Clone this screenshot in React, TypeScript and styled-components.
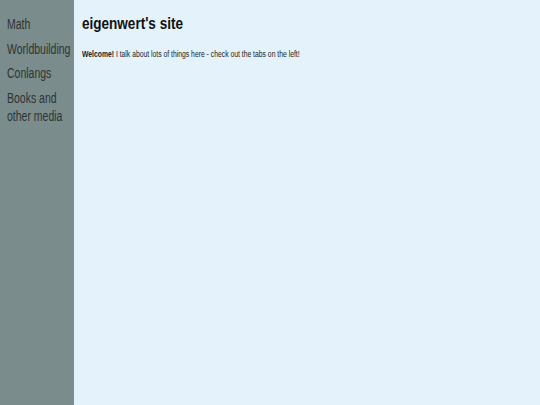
import React from "react";
import styled, { createGlobalStyle } from "styled-components";

const Global = createGlobalStyle`
  html, body { margin: 0; padding: 0; height: 100%; }
  body { font-family: "Liberation Sans", Arial, sans-serif; }
  #root { height: 100%; }
`;

const Page = styled.div`
  display: flex;
  width: 540px;
  height: 405px;
  background: #e3f2fb;
`;

const Sidebar = styled.nav`
  width: 74px;
  flex-shrink: 0;
  background: #7b8c8c;
  padding: 15px 0 0 7px;
  box-sizing: border-box;
  display: flex;
  flex-direction: column;
  align-items: flex-start;
  gap: 6.5px;
`;

const Squeeze = styled.span<{ $sx: number }>`
  display: inline-block;
  white-space: nowrap;
  transform: scaleX(${(p) => p.$sx});
  transform-origin: left center;
`;

const NavItem = styled.a`
  color: #2e3333;
  font-size: 14px;
  line-height: 18px;
  text-decoration: none;
`;

const Main = styled.main`
  flex: 1;
  padding: 14px 0 0 8px;
`;

const Title = styled.h1`
  margin: 0;
  font-size: 16.5px;
  line-height: 19px;
  font-weight: bold;
  color: #111;
`;

const Para = styled.p`
  margin: 16px 0 0;
  font-size: 8.5px;
  line-height: 10px;
  color: #222;
`;

export default function App() {
  return (
    <>
      <Global />
      <Page>
        <Sidebar>
          <NavItem><Squeeze $sx={0.75}>Math</Squeeze></NavItem>
          <NavItem><Squeeze $sx={0.75}>Worldbuilding</Squeeze></NavItem>
          <NavItem><Squeeze $sx={0.75}>Conlangs</Squeeze></NavItem>
          <NavItem><Squeeze $sx={0.75}>Books and<br />other media</Squeeze></NavItem>
        </Sidebar>
        <Main>
          <Title><Squeeze $sx={0.82}>eigenwert's site</Squeeze></Title>
          <Para><Squeeze $sx={0.8}><b>Welcome!</b> I talk about lots of things here - check out the tabs on the left!</Squeeze></Para>
        </Main>
      </Page>
    </>
  );
}
